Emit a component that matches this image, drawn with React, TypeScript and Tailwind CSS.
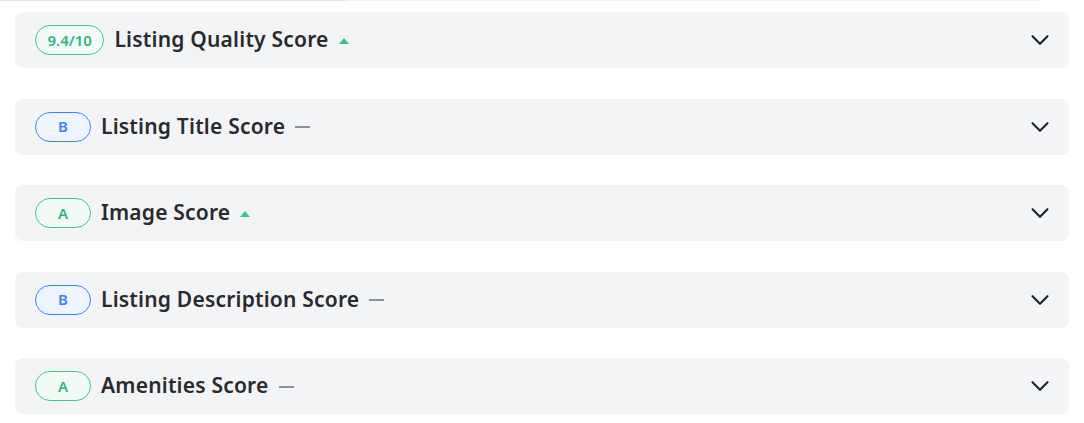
import { ChevronDown } from 'lucide-react';

type Trend = 'up' | 'flat';

const rows: { grade: string; tone: 'green' | 'blue'; title: string; trend: Trend }[] = [
  { grade: '9.4/10', tone: 'green', title: 'Listing Quality Score', trend: 'up' },
  { grade: 'B', tone: 'blue', title: 'Listing Title Score', trend: 'flat' },
  { grade: 'A', tone: 'green', title: 'Image Score', trend: 'up' },
  { grade: 'B', tone: 'blue', title: 'Listing Description Score', trend: 'flat' },
  { grade: 'A', tone: 'green', title: 'Amenities Score', trend: 'flat' },
];

function TrendMark({ trend }: { trend: Trend }) {
  if (trend === 'up') {
    return (
      <svg width="10" height="6" viewBox="0 0 10 6" className="mt-[1px]">
        <path d="M5 0L10 6H0Z" fill="#34c98a" />
      </svg>
    );
  }
  return <span className="block w-[15px] h-[2px] bg-[#8b8f96] mt-[1px]" />;
}

export default function App() {
  return (
    <div className="bg-white w-[1084px] h-[423px] font-['Noto_Sans',sans-serif]">
      <div className="flex h-px">
        <div className="w-[346px] bg-[#e3e3e3]" />
        <div className="w-[694px] bg-[#f3f3f3]" />
      </div>
      <div className="px-[15px] pt-[11px] flex flex-col gap-[30.5px]">
        {rows.map(r => (
          <div key={r.title} className="h-14 bg-[#f3f4f6] rounded-lg pl-5 pr-[14px] flex items-center">
            <span
              className={
                r.tone === 'green'
                  ? 'h-[30px] min-w-[56px] px-[11.5px] rounded-full border border-[#3cc990] bg-[#f3fbf7] text-[#2fb57f] text-[15px] font-semibold flex items-center justify-center'
                  : 'h-[30px] min-w-[56px] px-[11.5px] rounded-full border border-[#3b82f6] bg-[#eff5ff] text-[#3b82f6] text-[15px] font-semibold flex items-center justify-center'
              }
            >
              {r.grade}
            </span>
            <span className="ml-2.5 text-[21px] font-semibold text-[#2a2a2e] tracking-[0.2px]">{r.title}</span>
            <span className="ml-2.5">
              <TrendMark trend={r.trend} />
            </span>
            <ChevronDown size={30} strokeWidth={1.7} className="ml-auto text-[#1f2430]" />
          </div>
        ))}
      </div>
    </div>
  );
}
